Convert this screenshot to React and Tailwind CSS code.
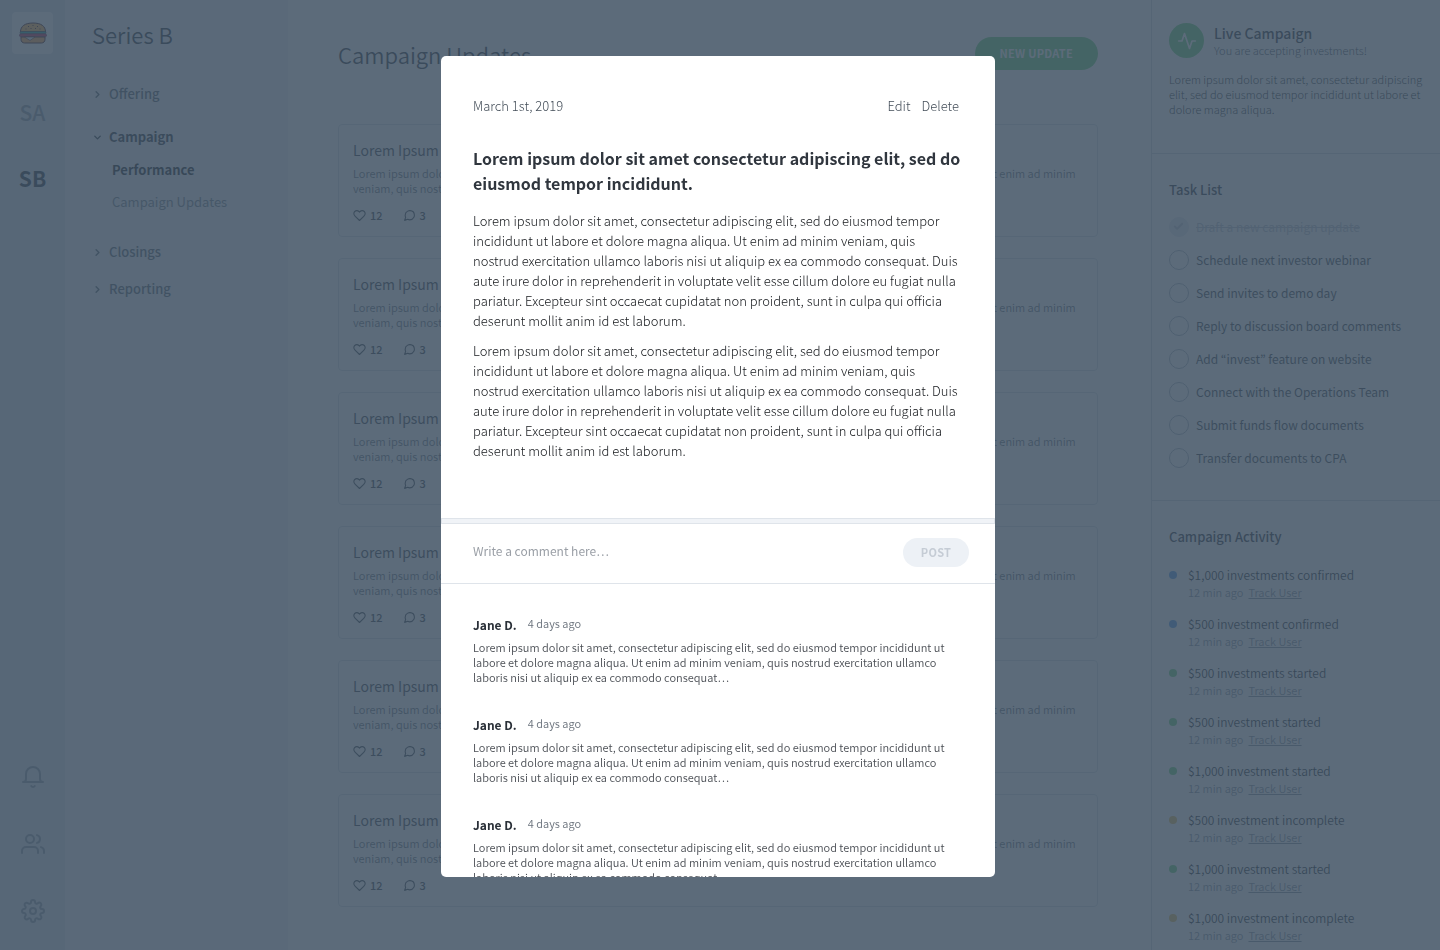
import { FiActivity, FiCheck, FiChevronDown, FiChevronRight, FiHeart, FiMessageCircle, FiSettings, FiUsers } from "react-icons/fi";

const LOREM =
  "Lorem ipsum dolor sit amet, consectetur adipiscing elit, sed do eiusmod tempor incididunt ut labore et dolore magna aliqua. Ut enim ad minim veniam, quis nostrud exercitation ullamco laboris nisi ut aliquip ex ea commodo consequat";
const LOREM_LONG =
  LOREM +
  ". Duis aute irure dolor in reprehenderit in voluptate velit esse cillum dolore eu fugiat nulla pariatur. Excepteur sint occaecat cupidatat non proident, sunt in culpa qui officia deserunt mollit anim id est laborum.";

const TASKS = [
  { label: "Draft a new campaign update", done: true },
  { label: "Schedule next investor webinar" },
  { label: "Send invites to demo day" },
  { label: "Reply to discussion board comments" },
  { label: "Add “invest” feature on website" },
  { label: "Connect with the Operations Team" },
  { label: "Submit funds flow documents" },
  { label: "Transfer documents to CPA" },
];

const ACTIVITY = [
  { label: "$1,000 investments confirmed", dot: "bg-[#4a96e8]" },
  { label: "$500 investment confirmed", dot: "bg-[#4a96e8]" },
  { label: "$500 investments started", dot: "bg-[#60d070]" },
  { label: "$500 investment started", dot: "bg-[#60d070]" },
  { label: "$1,000 investment started", dot: "bg-[#60d070]" },
  { label: "$500 investment incomplete", dot: "bg-[#e0b850]" },
  { label: "$1,000 investment started", dot: "bg-[#60d070]" },
  { label: "$1,000 investment incomplete", dot: "bg-[#e0b850]" },
];

function BurgerLogo() {
  return (
    <svg viewBox="0 0 28 22" className="w-7" aria-hidden="true">
      <path d="M1.5 10C1.5 4 6 1 14 1s12.500 3 12.500 9z" fill="#ffae42" stroke="#3a1018" strokeWidth="1" />
      <path d="M9 4.500h1M13.500 3.500h1M18 4.500h1M6.500 7h1M11.500 6.500h1M16 6.500h1M20.500 7h1" stroke="#3a1018" strokeWidth="1" />
      <rect x="1" y="9.500" width="26" height="2.500" rx="1.200" fill="#10a398" stroke="#1c2a38" strokeWidth=".6" />
      <rect x=".5" y="11.800" width="27" height="3" rx="1.500" fill="#c0204e" stroke="#5a1440" strokeWidth=".7" />
      <path d="M2 15h24v2.500c0 2-1.500 3.500-3.500 3.500h-17C3.500 21 2 19.500 2 17.500z" fill="#ffa042" stroke="#3a1018" strokeWidth="1" />
      <path d="M5.500 15l5.500 3.500L16 15z" fill="#e8eef2" stroke="#3a1018" strokeWidth=".6" />
    </svg>
  );
}

function BellIcon() {
  return (
    <svg viewBox="0 0 24 24" className="size-6" fill="none" stroke="currentColor" strokeWidth="2" strokeLinecap="round" strokeLinejoin="round" aria-hidden="true">
      <path d="M22 17H2a3 3 0 0 0 3-3V9a7 7 0 0 1 14 0v5a3 3 0 0 0 3 3zm-8.270 4a2 2 0 0 1-3.460 0" />
    </svg>
  );
}

function Rail() {
  return (
    <nav aria-label="Workspaces" className="flex w-[65px] shrink-0 flex-col items-center justify-between bg-[#dae2ea] pt-3 pb-[27px]">
      <div className="flex flex-col items-center">
        <a href="#home" aria-label="Home" className="flex h-[42px] w-[41px] items-center justify-center rounded bg-white">
          <BurgerLogo />
        </a>
        <a href="#series-a" className="mt-[43px] text-[21px] leading-[30px] font-medium text-[#8794a2]">SA</a>
        <a href="#series-b" className="mt-9 text-[21px] leading-[30px] font-bold text-[#1f2a35]">SB</a>
      </div>
      <div className="flex flex-col gap-[43px] text-[#8794a2]">
        <button type="button" aria-label="Notifications"><BellIcon /></button>
        <button type="button" aria-label="People"><FiUsers size={24} /></button>
        <button type="button" aria-label="Settings"><FiSettings size={24} /></button>
      </div>
    </nav>
  );
}

function Sidebar() {
  return (
    <nav aria-label="Series B" className="w-[223px] shrink-0 bg-[#edf1f5] pt-[18px] pl-[27px] text-[#4d5a68]">
      <h2 className="text-[22px] leading-8 font-[350] text-[#1f2a35]">Series B</h2>
      <a href="#offering" className="mt-[34px] flex items-center gap-[6px] text-[13px] leading-5 font-medium"><FiChevronRight size={11} strokeWidth={3} />Offering</a>
      <a href="#campaign" className="mt-[23px] flex items-center gap-[6px] text-[13px] leading-5 font-bold text-[#1f2a35]"><FiChevronDown size={11} strokeWidth={3} />Campaign</a>
      <a href="#performance" className="mt-[13px] ml-5 block text-[13px] leading-5 font-bold text-[#10181f]">Performance</a>
      <a href="#updates" className="mt-3 ml-5 block text-[13px] leading-5 text-[#6e7b88]">Campaign Updates</a>
      <a href="#closings" className="mt-[30px] flex items-center gap-[6px] text-[13px] leading-5 font-medium"><FiChevronRight size={11} strokeWidth={3} />Closings</a>
      <a href="#reporting" className="mt-[17px] flex items-center gap-[6px] text-[13px] leading-5 font-medium"><FiChevronRight size={11} strokeWidth={3} />Reporting</a>
    </nav>
  );
}

function UpdateCard() {
  return (
    <article className="rounded border border-[#d5dce4] px-[14px] pt-[15px] pb-[13px]">
      <h3 className="text-[14px] leading-5 text-[#2f3a45]">Lorem Ipsum Dolor Sit Amet</h3>
      <p className="mt-[6px] line-clamp-2 text-[11px] leading-[15px] font-[350] text-[#5b6876]">{LOREM}</p>
      <div className="mt-[11px] flex h-4 items-center gap-5 text-[11px] font-medium text-[#2f3a45]">
        <span className="flex items-center gap-1"><FiHeart size={13} />12</span>
        <span className="flex items-center gap-1"><FiMessageCircle size={13} />3</span>
      </div>
    </article>
  );
}

function MainPanel() {
  return (
    <main className="min-w-0 flex-1 overflow-hidden bg-white pt-[37px] pr-[53px] pl-[50px]">
      <header className="flex items-center justify-between">
        <h1 className="text-[22px] leading-8 font-[350] text-[#1f2a35]">Campaign Updates</h1>
        <button type="button" className="h-[33px] rounded-full bg-[#60d070] px-[25px] text-[11px] font-bold tracking-wide text-white">NEW UPDATE</button>
      </header>
      <div className="mt-[54px] flex flex-col gap-[21px]">
        {[1, 2, 3, 4, 5, 6].map((n) => <UpdateCard key={n} />)}
      </div>
    </main>
  );
}

function TaskItem({ label, done }) {
  return (
    <li>
      <label className="flex h-[33px] items-center gap-[7px]">
        <span className="relative flex size-5 shrink-0">
          <input
            type="checkbox"
            defaultChecked={done}
            className="peer size-5 appearance-none rounded-full border border-[#a3afbb] checked:border-[#e2e7ed] checked:bg-[#e2e7ed]"
          />
          <FiCheck size={11} strokeWidth={4} className="pointer-events-none absolute top-1 left-1 hidden text-[#b9c2cc] peer-checked:block" />
        </span>
        <span className={done ? "text-[12px] leading-5 text-[#b9c2cc] line-through" : "text-[12px] leading-5 text-[#2f3a45]"}>{label}</span>
      </label>
    </li>
  );
}

function RightPanel() {
  return (
    <aside className="w-[289px] shrink-0 overflow-hidden border-l border-[#ccd4dc] bg-white">
      <section className="border-b border-[#ccd4dc] px-[17px] pt-[23px] pb-9">
        <div className="flex items-center gap-[10px]">
          <span className="flex size-[35px] items-center justify-center rounded-full bg-[#60d070] text-white"><FiActivity size={20} /></span>
          <div>
            <h2 className="text-[14px] leading-[18px] font-medium text-[#1f2a35]">Live Campaign</h2>
            <p className="text-[11px] leading-4 font-light text-[#35424f]">You are accepting investments!</p>
          </div>
        </div>
        <p className="mt-[14px] text-[11px] leading-[15px] font-light text-[#10181f]">
          Lorem ipsum dolor sit amet, consectetur adipiscing elit, sed do eiusmod tempor incididunt ut labore et dolore magna aliqua.
        </p>
      </section>
      <section className="border-b border-[#ccd4dc] px-[17px] pt-[26px] pb-[26px]">
        <h2 className="text-[13px] leading-5 font-medium text-[#1f2a35]">Task List</h2>
        <ul className="mt-[10px]">
          {TASKS.map((t) => <TaskItem key={t.label} {...t} />)}
        </ul>
      </section>
      <section className="px-[17px] pt-[26px]">
        <h2 className="text-[13px] leading-5 font-medium text-[#1f2a35]">Campaign Activity</h2>
        <ul className="mt-[18px] flex flex-col gap-[15px]">
          {ACTIVITY.map((a, i) => (
            <li key={i} className="flex gap-[11px]">
              <span className={`mt-[6px] size-2 shrink-0 rounded-full ${a.dot}`} />
              <div>
                <p className="text-[12px] leading-5 font-[350] text-[#10181f]">{a.label}</p>
                <p className="flex gap-[5px] text-[11px] leading-[14px] font-[350] text-[#7f8d9c]">
                  12 min ago
                  <a href="#track" className="underline">Track User</a>
                </p>
              </div>
            </li>
          ))}
        </ul>
      </section>
    </aside>
  );
}

function Comment() {
  return (
    <article>
      <div className="flex gap-[11px]">
        <h3 className="text-[12px] leading-5 font-bold text-[#2a3038]">Jane D.</h3>
        <span className="text-[11px] leading-4 font-[350] text-[#69717b]">4 days ago</span>
      </div>
      <p className="mt-[5px] text-[11px] leading-[15px] font-[350] text-[#4b4f55]">{LOREM}…</p>
    </article>
  );
}

function UpdateDialog() {
  return (
    <div className="fixed inset-0 flex justify-center bg-[#405163]/85 pt-14 pr-1 pb-[73px]">
      <div role="dialog" aria-modal="true" aria-labelledby="update-title" className="h-full w-[554px] overflow-hidden rounded-[5px] bg-white">
        <section className="pt-10 pr-[26px] pb-[57px] pl-8">
          <div className="mr-[10px] flex justify-between text-[13px] leading-5 font-light text-[#444e59]">
            <time dateTime="2019-03-01">March 1st, 2019</time>
            <div className="flex gap-[11px]">
              <button type="button">Edit</button>
              <button type="button">Delete</button>
            </div>
          </div>
          <h2 id="update-title" className="mt-[30px] text-[16px] leading-[25px] font-bold text-[#30363e]">
            Lorem ipsum dolor sit amet consectetur adipiscing elit, sed do eiusmod tempor incididunt.
          </h2>
          <div className="mt-[15px] mr-[8px] flex flex-col gap-[10px] text-[13px] leading-5 font-light text-[#15181c]">
            <p>{LOREM_LONG}</p>
            <p>{LOREM_LONG}</p>
          </div>
        </section>
        <div className="h-[6px] border border-[#dfe4ea] bg-[#f0f3f7]" />
        <form className="flex h-[60px] items-center justify-between border-b border-[#dfe4ea] pr-[26px] pb-[2px] pl-8">
          <input
            type="text"
            aria-label="Write a comment"
            placeholder="Write a comment here…"
            className="h-6 min-w-0 flex-1 pb-1 text-[12px] leading-5 text-[#3a3e44] outline-none placeholder:text-[#9a9fa6]"
          />
          <button type="button" className="h-[29px] w-[66px] rounded-full bg-[#edf1f6] text-[11px] font-bold tracking-wide text-[#c5ccd5]">POST</button>
        </form>
        <section aria-label="Comments" className="flex flex-col gap-[30px] pt-[31px] pr-[46px] pl-8">
          <Comment />
          <Comment />
          <Comment />
        </section>
      </div>
    </div>
  );
}

export default function App() {
  return (
    <div className="flex h-screen overflow-hidden font-['Noto_Sans_CJK_KR','Noto_Sans',sans-serif] antialiased">
      <Rail />
      <Sidebar />
      <MainPanel />
      <RightPanel />
      <UpdateDialog />
    </div>
  );
}
